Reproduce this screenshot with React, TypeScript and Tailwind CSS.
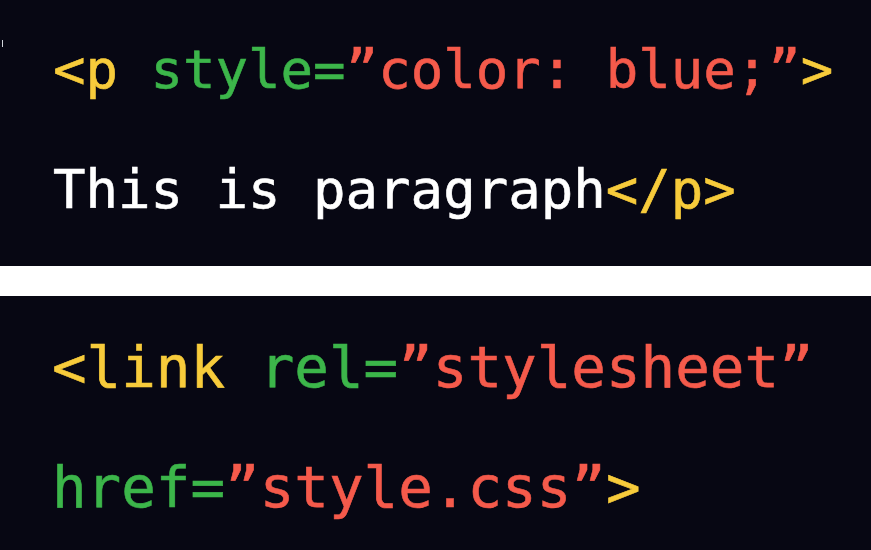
const Y = 'text-[#f7cb3b]';
const G = 'text-[#3cb64a]';
const R = 'text-[#f55a4b]';
const W = 'text-white';

type Seg = [string, string];

const top: Seg[][] = [
  [
    ['<p ', Y],
    ['style=', G],
    ['”color: blue;”', R],
    ['>', Y],
  ],
  [
    ['This is paragraph', W],
    ['</p>', Y],
  ],
];

const bottom: Seg[][] = [
  [
    ['<link ', Y],
    ['rel=', G],
    ['”stylesheet”', R],
  ],
  [
    ['href=', G],
    ['”style.css”', R],
    ['>', Y],
  ],
];

function Code({ lines }: { lines: Seg[][] }) {
  return (
    <div>
      {lines.map((line, i) => (
        <div key={i} className="whitespace-pre h-[120px] leading-[120px] [-webkit-text-stroke:0.6px_currentColor]">
          {line.map(([t, c], j) => (
            <span key={j} className={c}>
              {t}
            </span>
          ))}
        </div>
      ))}
    </div>
  );
}

export default function App() {
  return (
    <div
      className="w-[871px] h-[550px] overflow-hidden flex flex-col bg-white"
      style={{ fontFamily: '"DejaVu Sans Mono", "Liberation Mono", monospace' }}
    >
      <div className="relative h-[266px] bg-[#070713] pl-[53px] pt-[10px] text-[54px]">
        <div className="absolute left-[2px] top-[40px] w-px h-[7px] bg-gray-300" />
        <Code lines={top} />
      </div>
      <div className="h-[30px]" />
      <div className="h-[254px] bg-[#070713] pl-[52px] pt-[12px] text-[57.5px]">
        <Code lines={bottom} />
      </div>
    </div>
  );
}
